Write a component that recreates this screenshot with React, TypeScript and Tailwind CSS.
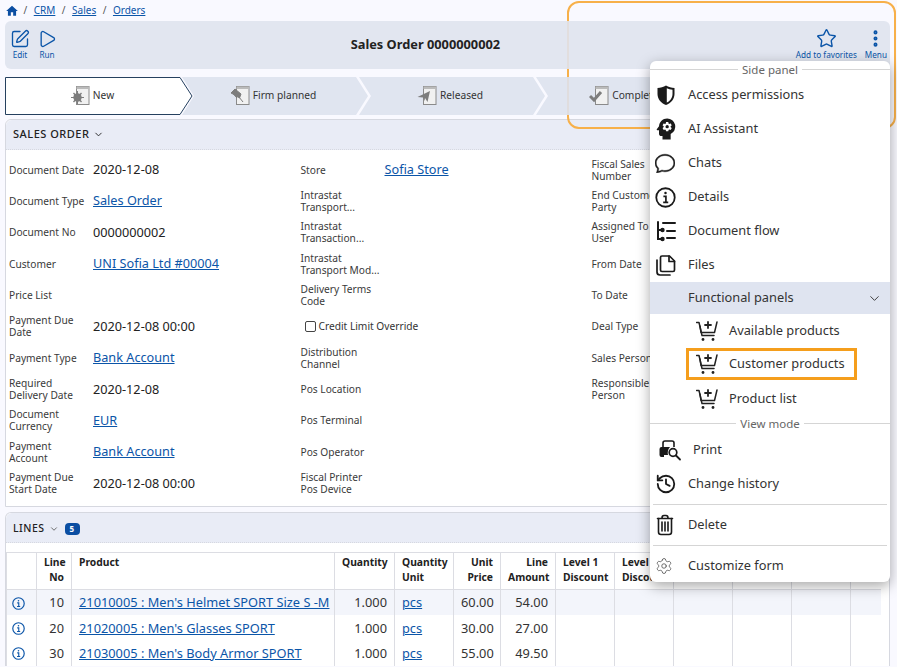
import React from 'react';
import { ChevronDown, Play, Settings, SquarePen, Star, History, EllipsisVertical } from 'lucide-react';
import { BsChat } from 'react-icons/bs';
import { MdPsychology, MdHome } from 'react-icons/md';

const font = "font-['Noto_Sans',sans-serif]";

const CartPlus = () => (
  <svg width="24" height="24" viewBox="0 0 24 24" fill="none" stroke="#222" strokeWidth="1.5" strokeLinecap="round" strokeLinejoin="round">
    <path d="M0.5 3.5 H3 L6 16.5 H18" />
    <path d="M4 7 L5 13.5 H18.5 L21 3" />
    <path d="M12 3 V9 M9 6 H15" strokeWidth="1.8" />
    <circle cx="7" cy="20.5" r="1.4" fill="#222" stroke="none" />
    <circle cx="17" cy="20.5" r="1.4" fill="#222" stroke="none" />
  </svg>
);

const ShieldHalf = () => (
  <svg width="22" height="22" viewBox="0 0 22 22">
    <path d="M11 1.5 C8.5 3 5.5 3.8 2.5 4 V10 C2.5 15 6 19 11 21 C16 19 19.5 15 19.5 10 V4 C16.5 3.8 13.5 3 11 1.5 Z" fill="#1a1a1a" />
    <path d="M11.8 4.2 C13.5 5 15.3 5.5 17.5 5.8 V10 C17.5 14 15 17 11.8 18.6 Z" fill="#fff" />
  </svg>
);

const InfoIcon = ({ size, color, weight }: { size: number; color: string; weight: number }) => (
  <svg width={size} height={size} viewBox="0 0 20 20" fill="none" stroke={color} strokeWidth={weight}>
    <circle cx="10" cy="10" r="8.8" />
    <path d="M8 9 H10.4 V14.5 M7.8 14.7 H12.6" strokeWidth={weight * 0.95} />
    <circle cx="10" cy="5.8" r="1.2" fill={color} stroke="none" />
  </svg>
);

const FlowIcon = () => (
  <svg width="22" height="22" viewBox="0 0 22 22" fill="none" stroke="#1a1a1a" strokeWidth="2" strokeLinecap="round">
    <path d="M8 3 H20 M3 2 V19 H6 M3 10 H6 M12 11 H20 M12 18 H20" />
    <circle cx="7.5" cy="10" r="1.2" fill="#1a1a1a" />
    <circle cx="7.5" cy="19" r="1.2" fill="#1a1a1a" />
  </svg>
);

const FilesIcon = () => (
  <svg width="22" height="22" viewBox="0 0 22 22" fill="none" stroke="#1a1a1a" strokeWidth="1.7" strokeLinejoin="round" strokeLinecap="round">
    <path d="M7 2 H14.5 L19.5 7 V16 Q19.5 17.5 18 17.5 H7 Q5.5 17.5 5.5 16 V3.5 Q5.5 2 7 2 Z" />
    <path d="M14 2 V7.5 H19.5" />
    <path d="M2 6 V18 Q2 21 5 21 H15" />
  </svg>
);

const PrintIcon = () => (
  <svg width="24" height="22" viewBox="0 0 24 22" fill="none">
    <path d="M5 8 V4 Q5 2 7 2 H14 Q16 2 16 4 V8" stroke="#1a1a1a" strokeWidth="1.6" />
    <path d="M3.5 8 H12 Q9 11 10 16 H6 V18 H3.5 Q1.5 18 1.5 16 V10 Q1.5 8 3.5 8 Z" fill="#1a1a1a" />
    <circle cx="15" cy="13.5" r="3.8" stroke="#1a1a1a" strokeWidth="1.7" />
    <path d="M18 16.5 L22 20.5" stroke="#1a1a1a" strokeWidth="1.8" strokeLinecap="round" />
  </svg>
);

const TrashIcon = () => (
  <svg width="22" height="22" viewBox="0 0 22 22" fill="none" stroke="#1a1a1a" strokeWidth="1.6" strokeLinecap="round" strokeLinejoin="round">
    <path d="M2.5 4.5 H17.5 M7 4 Q7 1.5 9 1.5 H11 Q13 1.5 13 4" />
    <path d="M3.5 4.5 V18 Q3.5 20.5 6 20.5 H14 Q16.5 20.5 16.5 18 V4.5" />
    <path d="M7 8 V17 M10 8 V17 M13 8 V17" />
  </svg>
);

const StepIcon = ({ kind }: { kind: string }) => (
  <svg width="20" height="20" viewBox="0 0 20 20" className="shrink-0">
    <rect x="6.5" y="0.5" width="12.5" height="18" fill="#f1f1f1" stroke="#8a8a8a" />
    <rect x="6.5" y="0.5" width="12.5" height="2.5" fill="#bbb" />
    {kind === 'new' && (
      <g fill="#7d7d7d">
        <circle cx="7.5" cy="11.5" r="4.2" />
        <path d="M7 5 h1 v13 h-1 z M1 11 h13 v1 h-13 z M3 7.5 l1-1 8 9 -1 1 z M11 6.5 l1 1 -8 9 -1-1 z" />
      </g>
    )}
    {kind === 'pin' && <path d="M1 7 L5 3 L11 8 L9.5 12 L6 9.5 Z M6 10 L3.5 8 L7 12 Z M9 11 L13 16" fill="#7d7d7d" stroke="#7d7d7d" />}
    {kind === 'plane' && <path d="M0.5 11 L13 5 L10.5 16 L8 12 L7.5 15 L6 11.5 Z" fill="#7d7d7d" />}
    {kind === 'check' && <path d="M1 10 L5 14 L12 6" fill="none" stroke="#7d7d7d" strokeWidth="3" />}
  </svg>
);

const steps = [
  { label: 'New', kind: 'new' },
  { label: 'Firm planned', kind: 'pin' },
  { label: 'Released', kind: 'plane' },
  { label: 'Completed', kind: 'check' },
];

type Field = { label?: string; value?: string; link?: boolean; check?: boolean };

const formRows: Field[][] = [
  [{ label: 'Document Date', value: '2020-12-08' }, { label: 'Store', value: 'Sofia Store', link: true }, { label: 'Fiscal Sales Number' }],
  [{ label: 'Document Type', value: 'Sales Order', link: true }, { label: 'Intrastat Transport...' }, { label: 'End Customer Party' }],
  [{ label: 'Document No', value: '0000000002' }, { label: 'Intrastat Transaction...' }, { label: 'Assigned To\nUser' }],
  [{ label: 'Customer', value: 'UNI Sofia Ltd #00004', link: true }, { label: 'Intrastat Transport Mod...' }, { label: 'From Date' }],
  [{ label: 'Price List' }, { label: 'Delivery Terms Code' }, { label: 'To Date' }],
  [{ label: 'Payment Due Date', value: '2020-12-08 00:00' }, { label: 'Credit Limit Override', check: true }, { label: 'Deal Type' }],
  [{ label: 'Payment Type', value: 'Bank Account', link: true }, { label: 'Distribution Channel' }, { label: 'Sales Person' }],
  [{ label: 'Required Delivery Date', value: '2020-12-08' }, { label: 'Pos Location' }, { label: 'Responsible Person' }],
  [{ label: 'Document Currency', value: 'EUR', link: true }, { label: 'Pos Terminal' }, {}],
  [{ label: 'Payment\nAccount', value: 'Bank Account', link: true }, { label: 'Pos Operator' }, {}],
  [{ label: 'Payment Due Start Date', value: '2020-12-08 00:00' }, { label: 'Fiscal Printer\nPos Device' }, {}],
];

const lines = [
  { no: 10, product: "21010005 : Men's Helmet SPORT Size S -M", qty: '1.000', price: '60.00', amount: '54.00' },
  { no: 20, product: "21020005 : Men's Glasses SPORT", qty: '1.000', price: '30.00', amount: '27.00' },
  { no: 30, product: "21030005 : Men's Body Armor SPORT", qty: '1.000', price: '55.00', amount: '49.50' },
];

const FormField = ({ field }: { field: Field }) => {
  if (field.check) {
    return (
      <div className="flex items-center gap-[3px] pl-1 text-[10.2px] text-[#333]">
        <span className="h-[11px] w-[11px] rounded-[2px] border border-[#444] bg-white" />
        {field.label}
      </div>
    );
  }
  return (
    <div className="flex items-center">
      <div className="w-[84px] shrink-0 whitespace-pre-line text-[10.2px] leading-3 text-[#3a3a3a]">{field.label}</div>
      {field.value && (
        <div className={field.link ? 'text-[12.7px] text-[#0b55a8] underline' : 'text-[12.7px] text-[#222]'}>{field.value}</div>
      )}
    </div>
  );
};

const MenuHeading = ({ text }: { text: string }) => (
  <div className="flex items-center gap-1 text-[11.5px] text-[#666]">
    <span className="h-px flex-1 bg-[#d5d5d5]" />
    {text}
    <span className="h-px flex-1 bg-[#d5d5d5]" />
  </div>
);

const MenuItem = ({ icon, label, indent }: { icon: React.ReactNode; label: string; indent?: string }) => (
  <div className={`flex h-[34px] items-center text-[12.8px] text-[#333] ${indent ?? 'pl-[5px]'}`}>
    <div className="flex w-[33px] shrink-0 items-center justify-start">{icon}</div>
    {label}
  </div>
);

const ActionMenu = () => (
  <div className="absolute left-[650px] top-[61px] z-20 h-[521px] w-[240px] rounded-md bg-white shadow-[0_4px_14px_rgba(0,0,0,0.35)]">
    <div className="h-[17px]"><MenuHeading text="Side panel" /></div>
    <MenuItem icon={<ShieldHalf />} label="Access permissions" />
    <MenuItem icon={<span className="-ml-[3px]"><MdPsychology size={28} color="#1a1a1a" /></span>} label="AI Assistant" />
    <MenuItem icon={<BsChat size={20} color="#1a1a1a" stroke="#1a1a1a" strokeWidth={0.4} />} label="Chats" />
    <MenuItem icon={<InfoIcon size={21} color="#1a1a1a" weight={1.7} />} label="Details" />
    <MenuItem icon={<FlowIcon />} label="Document flow" />
    <MenuItem icon={<FilesIcon />} label="Files" />
    <div className="flex h-8 items-center justify-between bg-[#dfe4f0] pl-[38px] pr-[8px] text-[12.8px] text-[#333]">
      Functional panels
      <ChevronDown size={15} strokeWidth={1.5} />
    </div>
    <MenuItem icon={<CartPlus />} label="Available products" indent="pl-[46px]" />
    <div className="mb-[2px] ml-[36px] flex h-[32px] w-[171px] items-center border-[3px] border-[#f59e1c] pl-[7px] text-[12.8px] text-[#333]">
      <div className="w-[33px] shrink-0"><CartPlus /></div>
      Customer products
    </div>
    <MenuItem icon={<CartPlus />} label="Product list" indent="pl-[46px]" />
    <div className="-mt-[1px] mb-[2px] h-4"><MenuHeading text="View mode" /></div>
    <MenuItem icon={<PrintIcon />} label="Print" indent="pl-[8px] [&>div]:w-[35px]" />
    <MenuItem icon={<History size={22} strokeWidth={2} color="#1a1a1a" />} label="Change history" />
    <div className="mx-[3px] mt-[3px] h-px bg-[#d5d5d5]" />
    <div className="mt-[3px]"><MenuItem icon={<TrashIcon />} label="Delete" /></div>
    <div className="mx-[3px] mt-[3px] h-px bg-[#d5d5d5]" />
    <div className="mt-[3px]"><MenuItem icon={<Settings size={18} strokeWidth={1} color="#444" />} label="Customize form" /></div>
  </div>
);

const App: React.FC = () => {
  return (
    <div className={`relative h-[667px] w-[897px] overflow-hidden bg-[#f9f9ff] ${font}`}>
      {/* orange callout behind the toolbar */}
      <div className="absolute left-[567px] top-[1px] h-[128px] w-[329px] rounded-xl border-2 border-[#f7b04a]" />

      <div className="flex h-[21px] items-center gap-[6.5px] pl-[5px] text-[10px] text-[#555]">
        <MdHome size={14} color="#0b4ea2" className="-mr-[2px]" />
        <span>/</span>
        <span className="text-[#0b55a8] underline">CRM</span>
        <span>/</span>
        <span className="text-[#0b55a8] underline">Sales</span>
        <span>/</span>
        <span className="text-[#0b55a8] underline">Orders</span>
      </div>

      <div className="relative mx-[5px] flex h-[48px] w-[885px] items-center rounded-md bg-[#dfe3ee]/90 pl-[5px] pr-[3px]">
        <div className="flex gap-[9px] text-[8.2px] text-[#0b55a8]">
          <div className="flex w-[20px] flex-col items-center">
            <SquarePen size={20} strokeWidth={1.6} />
            <span>Edit</span>
          </div>
          <div className="flex w-[16px] flex-col items-center">
            <Play size={20} strokeWidth={1.6} />
            <span>Run</span>
          </div>
        </div>
        <div className="flex-1 text-center text-[12.8px] font-bold text-[#222]">Sales Order 0000000002</div>
        <div className="flex gap-[8px] text-[8.2px] text-[#0b55a8]">
          <div className="flex flex-col items-center">
            <Star size={21} strokeWidth={1.6} />
            <span>Add to favorites</span>
          </div>
          <div className="flex flex-col items-center">
            <EllipsisVertical size={21} strokeWidth={2.6} />
            <span>Menu</span>
          </div>
        </div>
      </div>

      <div className="relative ml-[5px] mt-[8px] flex h-[38px]">
        {steps.map((step, i) => (
          <div
            key={step.label}
            className={`relative flex h-[38px] w-[186px] shrink-0 items-center justify-center text-[10.2px] text-[#333] ${
              i === 0
                ? 'bg-transparent pr-3'
                : '-ml-[9px] bg-[#dde2ee]/90 pr-1 [clip-path:polygon(0_0,174px_0,186px_50%,174px_100%,0_100%,12px_50%)]'
            }`}
          >
            {i === 0 && (
              <svg className="absolute inset-0" width="188" height="38" viewBox="0 0 188 38">
                <path d="M0.5 0.5 H175 L187 19 L175 37.5 H0.5 Z" fill="#fff" stroke="#25405f" strokeWidth="1" />
              </svg>
            )}
            <div className="relative flex items-center gap-[3px]">
              <StepIcon kind={step.kind} />
              <span className="-mt-[1px]">{step.label}</span>
            </div>
          </div>
        ))}
      </div>

      <div className="ml-[5px] mt-[4px] w-[885px] rounded-t-md border-x border-b border-t border-[#d6d8e0] bg-white">
        <div className="flex h-[30px] items-center gap-1 rounded-t-md border-b border-dotted border-[#d6d8e0] bg-[#e9ecf6] pl-[7px] text-[11px] font-medium tracking-[0.5px] text-[#222]">
          SALES ORDER
          <ChevronDown size={11} />
        </div>
        <div className="grid h-[356px] grid-cols-[291.5px_291px_1fr] auto-rows-[31.35px] content-start pl-[3px] pt-[4px]">
          {formRows.flat().map((field, i) => (
            <FormField key={i} field={field} />
          ))}
        </div>
      </div>

      <div className="ml-[5px] mt-[5px] w-[885px] rounded-t-md border-x border-t border-[#d6d8e0] bg-white">
        <div className="flex h-[30px] items-center gap-[6px] rounded-t-md border-b border-dotted border-[#d6d8e0] bg-[#e9ecf6] pl-[7px] pt-[3px] text-[10.5px] font-medium tracking-[0.5px] text-[#222]">
          <span className="flex items-center gap-1">
            LINES
            <ChevronDown size={10} color="#555" />
          </span>
          <span className="rounded-[4px] bg-[#0b4ea2] px-[5px] text-[8px] font-bold leading-[12px] text-white">5</span>
        </div>
        <table className="mt-[9px] w-[874px] table-fixed border-collapse text-[12.8px] text-[#333]">
          <colgroup>
            <col className="w-[30px]" />
            <col className="w-[35px]" />
            <col className="w-[263px]" />
            <col className="w-[60px]" />
            <col className="w-[59px]" />
            <col className="w-[47px]" />
            <col className="w-[55px]" />
            <col className="w-[59px]" />
            <col className="w-[59px]" />
            <col className="w-[59px]" />
            <col className="w-[59px]" />
            <col className="w-[59px]" />
            <col className="w-[30px]" />
          </colgroup>
          <thead>
            <tr className="h-[37px] border-y border-[#dcdde3] align-top text-[10.3px] font-bold leading-[15px] text-[#222] [&>th]:border-l [&>th]:border-[#dcdde3] [&>th]:px-[7px] [&>th]:pt-[2px] [&>th]:font-bold">
              <th></th>
              <th className="text-right">Line No</th>
              <th className="text-left">Product</th>
              <th className="text-right">Quantity</th>
              <th className="text-left">Quantity Unit</th>
              <th className="text-right">Unit Price</th>
              <th className="text-right">Line Amount</th>
              <th className="text-left">Level 1 Discount</th>
              <th className="text-left">Level 2 Discount</th>
              <th></th>
              <th></th>
              <th></th>
              <th></th>
            </tr>
          </thead>
          <tbody>
            {lines.map((line, i) => (
              <tr key={line.no} className={`h-[25.5px] [&>td]:border-l [&>td]:border-[#dcdde3] [&>td]:px-[7px] [&>td]:pt-px ${i === 0 ? 'bg-[#f3f5fb]' : ''}`}>
                <td className="!pl-[5px]"><InfoIcon size={13} color="#0b55a8" weight={1.8} /></td>
                <td className="text-right">{line.no}</td>
                <td className="whitespace-nowrap text-[#0b55a8] underline">{line.product}</td>
                <td className="text-right">{line.qty}</td>
                <td className="text-[#0b55a8] underline">pcs</td>
                <td className="text-right">{line.price}</td>
                <td className="text-right">{line.amount}</td>
                <td></td>
                <td></td>
                <td></td>
                <td></td>
                <td></td>
                <td></td>
              </tr>
            ))}
          </tbody>
        </table>
      </div>

      <ActionMenu />
    </div>
  );
};

export default App;
